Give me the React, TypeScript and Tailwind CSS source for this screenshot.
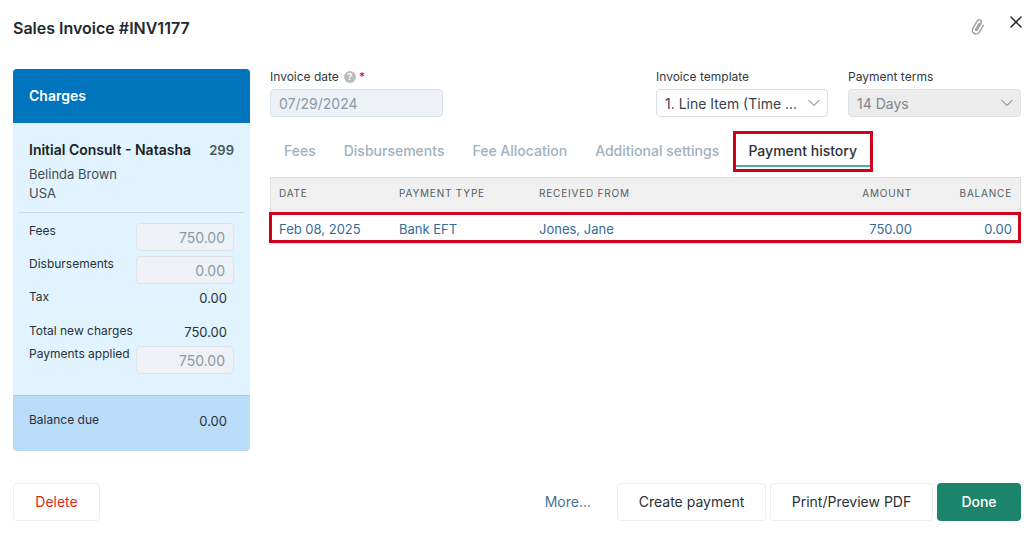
import { ChevronDown, X } from "lucide-react";

function ChargeInput({ value }: { value: string }) {
  return (
    <div className="w-[98px] h-[28px] rounded-[4px] border border-[#dde3e8] bg-[#eef2f6] pr-[8px] flex items-center justify-end text-[14px] text-[#8a99a6]">
      {value}
    </div>
  );
}

function Charges() {
  return (
    <div className="w-[237px] h-[382px] rounded-[4px] overflow-hidden flex flex-col bg-[#e0f3fe]">
      <div className="h-[54px] shrink-0 bg-[#0075bd] pl-[16px] pb-[1px] flex items-center text-[14px] font-semibold text-white">
        Charges
      </div>
      <div className="flex-1 flex flex-col">
        <div className="pl-[16px] pr-[16px] pt-[17px] h-[89px]">
          <div className="flex justify-between items-center text-[14px] font-semibold leading-[20px]">
            <span className="text-[#1a1f24]">Initial Consult - Natasha</span>
            <span className="text-[13px] text-[#4a5560]">299</span>
          </div>
          <div className="mt-[5px] text-[13px] leading-[19px] text-[#444c54]">Belinda Brown</div>
          <div className="text-[13px] leading-[19px] text-[#444c54]">USA</div>
        </div>
        <div className="mx-[6px] border-t border-[#c6d9e4]" />
        <div className="pl-[16px] pr-[16px] pt-[10px] text-[12px] text-[#2a3138]">
          <div className="flex justify-between h-[33px]">
            <span className="leading-[16px]">Fees</span>
            <ChargeInput value="750.00" />
          </div>
          <div className="flex justify-between h-[33px]">
            <span className="leading-[16px]">Disbursements</span>
            <ChargeInput value="0.00" />
          </div>
          <div className="flex justify-between h-[23px]">
            <span className="leading-[16px]">Tax</span>
            <span className="text-[13px] pr-[7px] leading-[18px]">0.00</span>
          </div>
          <div className="border-t border-[#e9f4fb]" />
          <div className="flex justify-between h-[33px] pt-[10px]">
            <span className="leading-[16px]">Total new charges</span>
            <span className="text-[13px] pr-[7px] leading-[18px]">750.00</span>
          </div>
          <div className="flex justify-between">
            <span className="leading-[16px]">Payments applied</span>
            <ChargeInput value="750.00" />
          </div>
        </div>
      </div>
      <div className="h-[56px] shrink-0 bg-[#b9dcf9] border-t border-[#a3cbe9] pl-[16px] pr-[23px] pt-[16px] flex justify-between text-[#2a3138]">
        <span className="text-[12px] leading-[16px]">Balance due</span>
        <span className="text-[13px] leading-[18px]">0.00</span>
      </div>
    </div>
  );
}

function Tabs() {
  return (
    <div className="relative flex items-start h-[46px] pl-[14px] mt-[14px] text-[14px] font-medium text-[#9fb1bd]">
      <div className="pt-[10px] leading-[20px]">Fees</div>
      <div className="pt-[10px] leading-[20px] ml-[28px]">Disbursements</div>
      <div className="pt-[10px] leading-[20px] ml-[28px]">Fee Allocation</div>
      <div className="pt-[10px] leading-[20px] ml-[28px]">Additional settings</div>
      <div className="ml-[16px] w-[135px] h-[36px] pt-[10px] leading-[20px] text-center text-[#2a3138] border-b-2 border-[#4fa9b4]">
        Payment history
      </div>
      <div className="absolute left-[463px] top-0 w-[140px] h-[41px] border-[3px] border-[#d0021b]" />
    </div>
  );
}

function PaymentTable() {
  return (
    <div className="relative">
      <div className="h-[35px] pb-[3px] flex items-center bg-[#f0f0f0] border border-[#dedede] border-b-0 text-[10px] tracking-[0.08em] text-[#555c63]">
        <div className="w-[128px] pl-[8px]">DATE</div>
        <div className="w-[140px]">PAYMENT TYPE</div>
        <div className="flex-1">RECEIVED FROM</div>
        <div className="w-[100px] text-right">AMOUNT</div>
        <div className="w-[108px] text-right pr-[8px]">BALANCE</div>
      </div>
      <div className="h-[32px] pt-[3px] flex items-center border border-[#e4e4e4] text-[13px] text-[#336b99]">
        <div className="w-[128px] pl-[8px]">Feb 08, 2025</div>
        <div className="w-[140px]">Bank EFT</div>
        <div className="flex-1">Jones, Jane</div>
        <div className="w-[100px] text-right">750.00</div>
        <div className="w-[108px] text-right pr-[8px]">0.00</div>
      </div>
      <div className="absolute left-[-1px] top-[35px] right-0 h-[31px] border-[3px] border-[#d0021b]" />
    </div>
  );
}

export default function App() {
  return (
    <div className="w-[1034px] h-[533px] bg-white relative overflow-hidden font-['Inter',sans-serif] px-[13px]">
      <div className="h-[69px] flex items-start justify-between">
        <h1 className="mt-[18px] text-[16px] leading-[20px] font-semibold text-[#24292e]">Sales Invoice #INV1177</h1>
        <div className="flex items-start">
          <svg viewBox="0 0 24 24" className="mt-[18px] w-[18px] h-[18px] rotate-[30deg] text-[#a3a3a3]" fill="none" stroke="currentColor" strokeWidth="2" strokeLinecap="round">
            <path d="M17 6.5V17a5 5 0 0 1-10 0V5.5a3 3 0 0 1 6 0V16a1 1 0 0 1-2 0V7" />
          </svg>
          <X className="mt-[12px] ml-[19px] mr-[-5px] w-[20px] h-[20px] text-[#222]" strokeWidth={1.7} />
        </div>
      </div>
      <div className="flex gap-[20px]">
        <Charges />
        <div className="w-[751px]">
          <div className="flex">
            <div className="w-[386px]">
              <div className="flex items-center h-[16px] text-[12px] text-[#333a41]">
                Invoice date
                <span className="ml-[5px] w-[12px] h-[12px] rounded-full bg-[#bdbdbd] flex items-center justify-center text-[9px] font-bold text-white">?</span>
                <span className="ml-[3px] text-[#d0021b]">*</span>
              </div>
              <div className="mt-[4px] w-[173px] h-[28px] rounded-[4px] border border-[#d9e2e8] bg-[#eef2f6] pl-[8px] flex items-center text-[14px] text-[#8a99a6]">
                07/29/2024
              </div>
            </div>
            <div className="w-[172px]">
              <div className="h-[16px] leading-[16px] text-[12px] text-[#333a41]">Invoice template</div>
              <div className="mt-[4px] w-[172px] h-[28px] rounded-[4px] border border-[#d5dfe6] bg-white pl-[8px] pr-[3px] flex items-center justify-between text-[14px] text-[#3a424a]">
                <span>1. Line Item (Time ...</span>
                <ChevronDown className="w-[20px] h-[20px] text-[#5f6b75]" strokeWidth={1.2} />
              </div>
            </div>
            <div className="w-[173px] ml-[20px]">
              <div className="h-[16px] leading-[16px] text-[12px] text-[#333a41]">Payment terms</div>
              <div className="mt-[4px] w-[173px] h-[28px] rounded-[4px] border border-[#d9e2e8] bg-[#ececec] pl-[8px] pr-[3px] flex items-center justify-between text-[14px] text-[#7d8790]">
                <span>14 Days</span>
                <ChevronDown className="w-[20px] h-[20px] text-[#5f6b75]" strokeWidth={1.2} />
              </div>
            </div>
          </div>
          <Tabs />
          <PaymentTable />
        </div>
      </div>
      <div className="absolute left-[13px] right-[13px] top-[483px] flex items-center text-[14px]">
        <div className="w-[87px] h-[38px] pb-[1px] rounded-[4px] border border-[#eeeeee] flex items-center justify-center text-[#dc2a1b]">
          Delete
        </div>
        <div className="ml-auto mr-[26px] pb-[1px] text-[#46739b]">More...</div>
        <div className="w-[149px] h-[38px] pb-[1px] rounded-[4px] border border-[#eeeeee] flex items-center justify-center text-[#2a3138]">
          Create payment
        </div>
        <div className="ml-[4px] w-[163px] h-[38px] pb-[1px] rounded-[4px] border border-[#eeeeee] flex items-center justify-center text-[#2a3138]">
          Print/Preview PDF
        </div>
        <div className="ml-[4px] w-[84px] h-[38px] pb-[1px] rounded-[4px] bg-[#1b846b] flex items-center justify-center font-medium text-white">
          Done
        </div>
      </div>
    </div>
  );
}
